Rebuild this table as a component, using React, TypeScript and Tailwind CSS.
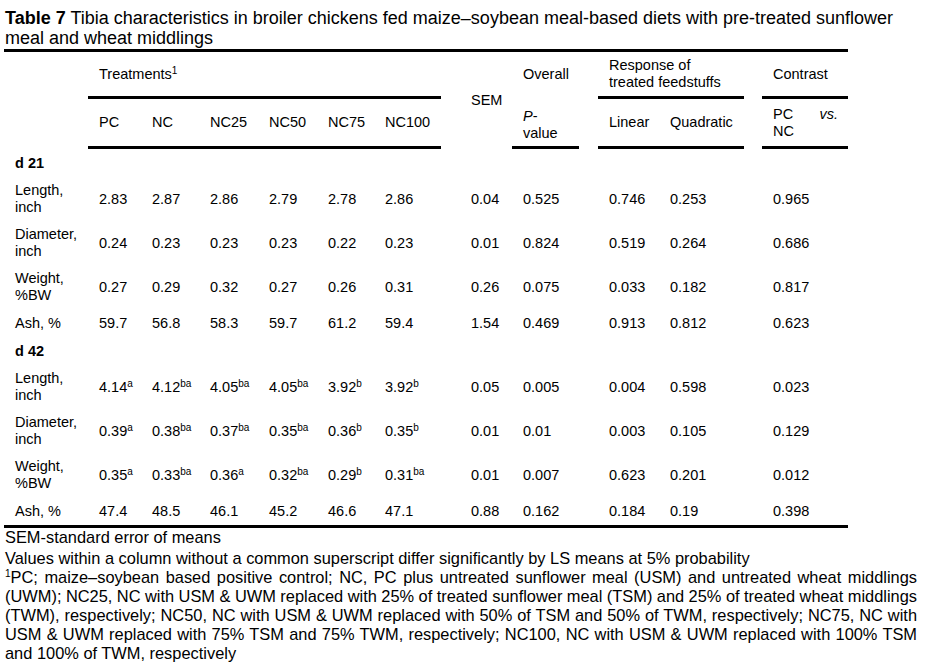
import React from 'react';

type Cell = { v: string; s?: string };

interface DataRow {
  label: string[];
  treatments: Cell[];
  sem: string;
  p: string;
  linear: string;
  quadratic: string;
  contrast: string;
}

const grid =
  'grid grid-cols-[84px_53px_58px_59px_59px_57px_67px_19px_52px_67px_19px_61px_85px_18px_86px]';

const c = (v: string, s?: string): Cell => ({ v, s });

const day21: DataRow[] = [
  {
    label: ['Length,', 'inch'],
    treatments: [c('2.83'), c('2.87'), c('2.86'), c('2.79'), c('2.78'), c('2.86')],
    sem: '0.04',
    p: '0.525',
    linear: '0.746',
    quadratic: '0.253',
    contrast: '0.965',
  },
  {
    label: ['Diameter,', 'inch'],
    treatments: [c('0.24'), c('0.23'), c('0.23'), c('0.23'), c('0.22'), c('0.23')],
    sem: '0.01',
    p: '0.824',
    linear: '0.519',
    quadratic: '0.264',
    contrast: '0.686',
  },
  {
    label: ['Weight,', '%BW'],
    treatments: [c('0.27'), c('0.29'), c('0.32'), c('0.27'), c('0.26'), c('0.31')],
    sem: '0.26',
    p: '0.075',
    linear: '0.033',
    quadratic: '0.182',
    contrast: '0.817',
  },
  {
    label: ['Ash, %'],
    treatments: [c('59.7'), c('56.8'), c('58.3'), c('59.7'), c('61.2'), c('59.4')],
    sem: '1.54',
    p: '0.469',
    linear: '0.913',
    quadratic: '0.812',
    contrast: '0.623',
  },
];

const day42: DataRow[] = [
  {
    label: ['Length,', 'inch'],
    treatments: [c('4.14', 'a'), c('4.12', 'ba'), c('4.05', 'ba'), c('4.05', 'ba'), c('3.92', 'b'), c('3.92', 'b')],
    sem: '0.05',
    p: '0.005',
    linear: '0.004',
    quadratic: '0.598',
    contrast: '0.023',
  },
  {
    label: ['Diameter,', 'inch'],
    treatments: [c('0.39', 'a'), c('0.38', 'ba'), c('0.37', 'ba'), c('0.35', 'ba'), c('0.36', 'b'), c('0.35', 'b')],
    sem: '0.01',
    p: '0.01',
    linear: '0.003',
    quadratic: '0.105',
    contrast: '0.129',
  },
  {
    label: ['Weight,', '%BW'],
    treatments: [c('0.35', 'a'), c('0.33', 'ba'), c('0.36', 'a'), c('0.32', 'ba'), c('0.29', 'b'), c('0.31', 'ba')],
    sem: '0.01',
    p: '0.007',
    linear: '0.623',
    quadratic: '0.201',
    contrast: '0.012',
  },
  {
    label: ['Ash, %'],
    treatments: [c('47.4'), c('48.5'), c('46.1'), c('45.2'), c('46.6'), c('47.1')],
    sem: '0.88',
    p: '0.162',
    linear: '0.184',
    quadratic: '0.19',
    contrast: '0.398',
  },
];

// footnote lines as broken in the printed table
const noteLines = [
  'PC; maize–soybean based positive control; NC, PC plus untreated sunflower meal (USM) and untreated wheat middlings',
  '(UWM); NC25, NC with USM & UWM replaced with 25% of treated sunflower meal (TSM) and 25% of treated wheat middlings',
  '(TWM), respectively; NC50, NC with USM & UWM replaced with 50% of TSM and 50% of TWM, respectively; NC75, NC with',
  'USM & UWM replaced with 75% TSM and 75% TWM, respectively; NC100, NC with USM & UWM replaced with 100% TSM',
];

const Sup = ({ children }: { children: React.ReactNode }) => (
  <sup className="text-[10px] -top-[5px]">{children}</sup>
);

const Rule = () => <div className="h-[3px] w-[844px] bg-black" />;

const BodyRow = ({ row }: { row: DataRow }) => {
  const tall = row.label.length > 1;
  return (
    <div className={`${grid} items-center ${tall ? 'h-[44px]' : 'h-[28px]'}`}>
      <div className="pl-[11px]">
        {row.label.map((l) => (
          <div key={l}>{l}</div>
        ))}
      </div>
      {row.treatments.map((t, i) => (
        <div key={i} className="pl-[11px] whitespace-nowrap">
          {t.v}
          {t.s && <Sup>{t.s}</Sup>}
        </div>
      ))}
      <div />
      <div className="pl-[11px]">{row.sem}</div>
      <div className="pl-[11px]">{row.p}</div>
      <div />
      <div className="pl-[11px]">{row.linear}</div>
      <div className="pl-[11px]">{row.quadratic}</div>
      <div />
      <div className="pl-[11px]">{row.contrast}</div>
    </div>
  );
};

const DayRow = ({ label }: { label: string }) => (
  <div className="h-[28px] flex items-center pl-[11px] font-bold">{label}</div>
);

export default function App() {
  const line = 'border-b-[3px] border-black';
  return (
    <div className="min-h-[667px] w-[939px] bg-white pl-[4px] pt-[8px] text-black font-['Liberation_Sans',Arial,sans-serif]">
      <h1 className="ml-[1px] w-[930px] text-[18px] leading-[20px] font-normal">
        <span className="font-bold">Table 7</span> Tibia characteristics in broiler chickens fed maize–soybean
        meal-based diets with pre-treated sunflower meal and wheat middlings
      </h1>

      <div className="mt-[1px] text-[14.5px] leading-[17px]">
        <Rule />

        {/* header */}
        <div className={`${grid} grid-rows-[47px_50px]`}>
          <div className="row-span-2" />
          <div className={`col-span-6 flex items-center pl-[11px] ${line}`}>
            <span>
              Treatments<Sup>1</Sup>
            </span>
          </div>
          <div className="row-span-2" />
          <div className="row-span-2 flex items-center pl-[11px]">SEM</div>
          <div className="flex items-center pl-[11px] pb-[3px]">Overall</div>
          <div className="row-span-2" />
          <div className={`col-span-2 flex items-center pl-[11px] ${line}`}>
            <div>
              <div>Response of</div>
              <div>treated feedstuffs</div>
            </div>
          </div>
          <div className="row-span-2" />
          <div className={`flex items-center pl-[11px] ${line}`}>Contrast</div>

          {['PC', 'NC', 'NC25', 'NC50', 'NC75', 'NC100'].map((t) => (
            <div key={t} className={`flex items-center pl-[11px] ${line}`}>
              {t}
            </div>
          ))}
          <div className={`flex items-center pl-[11px] ${line}`}>
            <div className="pt-[4px]">
              <div>
                <i>P</i>-
              </div>
              <div>value</div>
            </div>
          </div>
          <div className={`flex items-center pl-[11px] ${line}`}>Linear</div>
          <div className={`flex items-center pl-[11px] ${line}`}>Quadratic</div>
          <div className={`flex items-center pl-[11px] pr-[10px] ${line}`}>
            <div className="w-full">
              <div className="flex justify-between">
                <span>PC</span>
                <i>vs.</i>
              </div>
              <div>NC</div>
            </div>
          </div>
        </div>

        {/* body */}
        <DayRow label="d 21" />
        {day21.map((r) => (
          <BodyRow key={r.label[0]} row={r} />
        ))}
        <DayRow label="d 42" />
        {day42.map((r) => (
          <BodyRow key={r.label[0]} row={r} />
        ))}

        <Rule />
      </div>

      {/* notes */}
      <div className="ml-[1px] w-[912px] text-[16.4px] leading-[19px]">
        <p>SEM-standard error of means</p>
        <p className="mt-[2px]">
          Values within a column without a common superscript differ significantly by LS means at 5% probability
        </p>
        {noteLines.map((l, i) => (
          <p key={i} className="text-justify [text-align-last:justify] [word-spacing:-2px]">
            {i === 0 && <sup className="text-[10px] -top-[6px]">1</sup>}
            {l}
          </p>
        ))}
        <p>and 100% of TWM, respectively</p>
      </div>
    </div>
  );
}
